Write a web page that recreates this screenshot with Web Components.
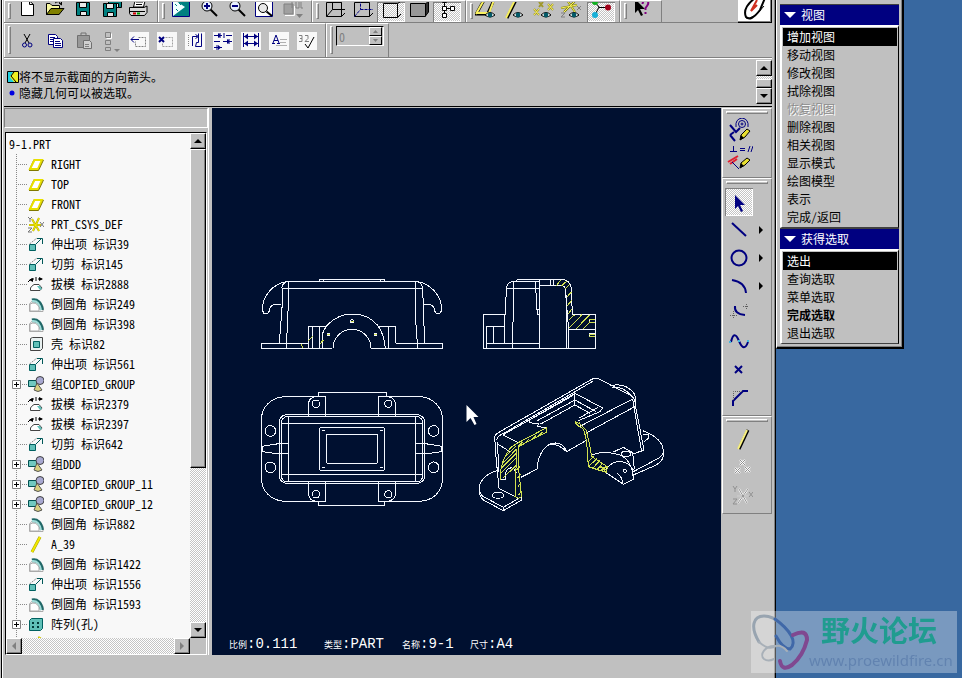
<!DOCTYPE html>
<html lang="zh-CN">
<head>
<meta charset="utf-8">
<title>9-1.PRT</title>
<style>
    :root{--face:#c0c0c0;--dark:#808080;--dither:repeating-conic-gradient(#fff 0 25%,#c4c4c4 0 50%) 0 0/2px 2px}
    body{margin:0;height:100vh;overflow:hidden;display:grid;grid-template-columns:minmax(0,1fr) 128px 58px;align-items:start;background:#3868a0;font:12px/16px "Noto Sans Mono CJK SC","Noto Sans CJK SC",sans-serif;color:#000}
</style>
</head>
<body>
<cad-window>
    <tool-bar slot="bars" kind="top">
        <tool-group>
            <tool-button icon="new" label="新建"></tool-button>
            <tool-button icon="open" label="打开"></tool-button>
            <tool-button icon="save" label="保存"></tool-button>
            <tool-button icon="copies" label="保存副本"></tool-button>
            <tool-button icon="print" label="打印"></tool-button>
        </tool-group>
        <tool-group>
            <tool-button icon="repaint" label="重画"></tool-button>
            <tool-button icon="zoomin" label="放大"></tool-button>
            <tool-button icon="zoomout" label="缩小"></tool-button>
            <tool-button icon="refit" label="重新调整"></tool-button>
            <tool-button icon="views" label="视图列表"></tool-button>
        </tool-group>
        <tool-group>
            <tool-button icon="wire" label="线框"></tool-button>
            <tool-button icon="hidden" label="隐藏线"></tool-button>
            <tool-button icon="nohidden" label="无隐藏线" pressed></tool-button>
            <tool-button icon="shade" label="着色"></tool-button>
            <tool-button icon="tree" label="模型树" pressed></tool-button>
        </tool-group>
        <tool-group>
            <tool-button icon="planes" label="基准面"></tool-button>
            <tool-button icon="axes" label="基准轴"></tool-button>
            <tool-button icon="points" label="基准点"></tool-button>
            <tool-button icon="csys" label="坐标系"></tool-button>
            <tool-button icon="spin" label="旋转中心" pressed></tool-button>
        </tool-group>
        <tool-group>
            <tool-button icon="help" label="帮助"></tool-button>
        </tool-group>
        <brand-button slot="end"></brand-button>
    </tool-bar>
    <tool-bar slot="bars">
        <tool-group>
            <tool-button icon="cut" label="剪切"></tool-button>
            <tool-button icon="copy" label="复制"></tool-button>
            <tool-button icon="paste" label="粘贴"></tool-button>
            <tool-button icon="parts" label="特征"></tool-button>
            <tool-button icon="arrowbox" label="移动"></tool-button>
            <tool-button icon="erasebox" label="拭除"></tool-button>
            <tool-button icon="switch" label="切换"></tool-button>
            <tool-button icon="align" label="对齐"></tool-button>
            <tool-button icon="dim" label="尺寸"></tool-button>
            <tool-button icon="note" label="注释"></tool-button>
            <tool-button icon="finish" label="粗糙度"></tool-button>
        </tool-group>
        <tool-group><spin-box value="0"></spin-box></tool-group>
    </tool-bar>
    <message-area slot="message"></message-area>
    <model-tree slot="tree"></model-tree>
    <drawing-view slot="view"></drawing-view>
    <tool-palette slot="palette"></tool-palette>
</cad-window>
<menu-manager>
    <menu-panel name="视图" items="增加视图*|移动视图|修改视图|拭除视图|恢复视图-|删除视图|相关视图|显示模式|绘图模型|表示|完成/返回"></menu-panel>
    <menu-panel name="获得选取" items="选出*|查询选取|菜单选取|完成选取!|退出选取"></menu-panel>
</menu-manager>
<site-mark></site-mark>

<script>
const N = '#000080', T = '#008080';
const line = (d, c = '#000', w = 1) => `<path d="${d}" fill="none" stroke="${c}" stroke-width="${w}"/>`;
const fill = (d, c, s = 'none') => `<path d="${d}" fill="${c}" stroke="${s}"/>`;
const paper = fill('M4 5h20v18H4z', '#f8f8f8');
const eye = fill('M10 13q5-5 10 0q-5 4-10 0z', '#fff', '#000') + '<circle cx="15" cy="13" r="2.4" fill="#045a68"/>';
const floppy = (x, y) => fill(`M${x} ${y}h13v13h-13z`, T, '#000') + fill(`M${x + 3} ${y}h7v5h-7zM${x + 4} ${y + 9}h6v4h-6z`, '#e8e8e8', '#000');
const lens = line('M15.500 7.500L22 14', '#000', 2) + '<circle cx="12" cy="4" r="5" fill="#e8f0ff" stroke="#000"/>';
const ARROW = 'v14l3-3 3 6 2-1-3-6h5z';

// top row glyphs live in a 28x20 box, all the others in 28x28
const TOP = {
    new: fill('M8.500-5V13.500H20.500V2.500L16.500-1V-5z', '#fff', '#000') + line('M16.500-1V2.500H20.500'),
    open: fill('M5.500 12.500V1.500H9L11 3.500H18.500V12z', '#f7f7a0', '#000') + fill('M5.500 12.500L10 6.500H23L18 12.500z', '#808000', '#000') + line('M14 1Q18-2 20 2M18 1L20.500 3V-1'),
    save: floppy(7.5, .5),
    copies: floppy(11.500, -7.500) + floppy(6.500, 1.500),
    print: fill('M8.500 5L10.500-3H20.500L18.500 5z', '#fff', '#000') + line('M11 0H18M11 2.500H17') + fill('M4.500 5.500H19L22 4V10.500L19.500 13.500H6L4.500 11.500z', '#d8d8d8', '#000') + line('M5 9.500H20') + fill('M8 10.500h3v2h-3z', '#d00000') + fill('M12 10.500h3v2h-3z', '#00a000'),
    repaint: fill('M5.500-3V14.500H22.500V-3z', T, N) + fill('M6-3L18 5L6 14z', '#f0ffff') + line('M8 2L10 4M12 1L14 3M9 7L11 9', T),
    zoomin: lens + line('M9 4H15M12 1V7', N, 2),
    zoomout: lens + line('M9 4H15', N, 2),
    refit: fill('M4.500-3V14.500H21.500V-3z', '#fff', N) + line('M15.500 9.500L21 14', '#000', 2) + '<circle cx="12" cy="6" r="4.500" fill="#e8e8e8" stroke="#000"/>',
    views: fill('M5 2h9v10H5z', '#a0a0a0', '#808080') + line('M13 0V6M17 0V6H20V0M22 0V6H24', '#808080') + line('M6 13.500H15.500V4', '#fff') + fill('M17 12h7l-3.500 4z', '#808080'),
    wire: line('M5.500 14.500V.500H20.500V14.500zM5.500 14.500L11.500 7.500V-3M11.500 7.500H24M20.500 14.500L24 11M20.500 .500L23-2'),
    hidden: line('M5.500 14.500V.500H20.500V14.500zM20.500 14.500L24 11M20.500 .500L23-2') + '<path d="M5.500 14.500L11.500 7.500V-3M11.500 7.500H24" fill="none" stroke="#000080" stroke-dasharray="3 1"/>',
    nohidden: line('M6.500 1.500V15.500H20.500V1.500zM20.500 15.500L24 12M20.500 1.500L23 0'),
    shade: fill('M20.500 2L23.500-1V10L20.500 14z', '#303030', '#000') + fill('M5.500 1.500H20.500V14.500H5.500z', '#989898', '#000'),
    tree: fill('M9.500-3.500h4v4h-4zM9.500 4.500h4v4h-4zM9.500 11.500h4v4h-4zM17.500 4.500h4v4h-4z', '#fff', '#000') + line('M11.500 1V4M14 6.500H17M11.500 9V11'),
    planes: line('M0 12H16M1 12.500L9-2M18 0L13 11', '#000', 3) + line('M1 12L9-2H19L14 11H1', '#f8f060', 2) + eye,
    axes: line('M4 16L13-2', '#000', 3) + line('M3 16L12-2', '#f8f060', 2) + eye,
    points: line('M8 0l4 5M12 0l-4 5M3 7l5 6M8 7l-5 6M17 2l5 6M22 2l-5 6', '#a0982c', 2) + line('M3 7l5 6M8 7l-5 6M17 2l5 6M22 2l-5 6', '#f8f060') + eye,
    csys: line('M2 6L18 3M8-2L16 10M17-2L5 10', '#808000', 2) + line('M2 6L18 3M8-2L16 10M17-2L5 10', '#f8f060') + line('M2 11h4l-4 4h4M18 4l4 4M22 4l-4 4', '#808080') + eye,
    spin: line('M8 0L12 5L8 13M12 5.500H21') + '<circle cx="8" cy="0" r="3" fill="#10b020"/><circle cx="8" cy="13" r="3" fill="#18b0d8"/><circle cx="21" cy="5.500" r="3" fill="#a00018"/>',
    help: fill('M6-3' + ARROW, '#000') + line('M13.500 2Q14-2 17-2Q21 0 18 4L16.500 6V8M16.500 10V12', '#800080', 2)
};
const ICON = {
    cut: line('M11 7L16 16M17 7L12 16') + '<circle cx="11.500" cy="18" r="2" fill="none" stroke="#000080"/><circle cx="17" cy="18" r="2" fill="none" stroke="#000080"/>',
    copy: fill('M7.500 7.500h7l2 2v8h-9z', '#fff', N) + line('M9 10.500h5M9 12.500h5M9 14.500h5', N) + fill('M12.500 11.500h7l2 2v7h-9z', '#fff', N) + line('M14 14.500h5M14 16.500h6M14 18.500h6', N),
    paste: fill('M8.500 8.500h12v12h-12z', '#989898', '#707070') + line('M12 8V6h5v2', '#707070') + fill('M14.500 13.500h6l2 2v6h-8z', '#d0d0d0', '#707070') + line('M16 17.500h4M16 19.500h4', '#808080'),
    parts: line('M8.500 5.500h5v5h-5zM8.500 13.500h5v4h-5zM8.500 20.500h5v3h-5z', '#808080') + line('M9.500 11.500h5v-5', '#fff') + fill('M17 22h6l-3 3z', '#808080'),
    arrowbox: paper + line('M6 12.500h8M9 9.500l-3 3 3 3', N) + '<path d="M13.500 10.500h7v9h-10v-5" fill="none" stroke="#808080" stroke-dasharray="2 1"/>',
    erasebox: paper + line('M6 10l5 5M11 10l-5 5', N, 2) + '<path d="M12.500 10.500h7v9h-10v-3" fill="none" stroke="#a0a0a0" stroke-dasharray="2 1"/>',
    switch: paper + line('M11.500 19V9.500h5M14.500 7.500l3 2-3 2M20.500 6.500v13h-6l1-4h2v-9', N) + '<path d="M7.500 8v12" stroke="#888" stroke-dasharray="1 1"/>',
    align: paper + line('M5 8.500h8M17 8.500h6M5 14.500h6M14 14.500h9M5 20.500h8M11 6v5M15 6v5M20 12v5M8 18v5', N) + fill('M9 6l3 2.500-3 2.500zM18 12l3 2.500-3 2.500zM9 18l3 2.500-3 2.500z', N),
    dim: paper + line('M6.500 6v14M21.500 6v14M7 9.500h14M7 16.500h14', N) + fill('M7 9.500l4-3v6zM21 9.500l-4-3v6zM7 16.500l4-3v6zM21 16.500l-4-3v6z', N),
    note: paper + line('M8 16l3-8 3 8M9 13.500h4M7 16.500h3M12 16.500h3', N) + line('M15 12.500h7M15 15.500h6M11 18.500h11', '#b0b0b0'),
    finish: paper + line('M12 17l3 4 6-11', '#000') + line('M6 8.500h3v3H7h2v3H6M12 8.500h3v3l-3 3h4', '#808080'),
    sketch: line('M5 7l6 7 4-4M5 17l5 6M5 17l4-3', N, 2) + '<g fill="none" stroke="#000080"><circle cx="17" cy="6" r="1"/><circle cx="17" cy="6" r="3.500"/><path d="M11 9Q10 1 17 0Q24 1 23 9"/></g>' + fill('M15 22l1-5 6-6 3 2-5 6z', '#e8e030', '#000') + fill('M15 22l1-5 3 3z', '#000'),
    constrain: line('M8.500 0v5M5 5.500h7M15 2.500h5M15 4.500h5M23 6l2-6M26 6l2-6', N) + line('M3 16l10-6M5 18l7-5', '#e02030', 2) + line('M7 16l7 7', N) + fill('M15 22l1-5 6-5 3 2-5 5z', '#e8e030', '#000') + fill('M15 22l1-5 3 3z', '#000'),
    select: fill('M10 7' + ARROW, N),
    line: line('M7 7L21 20', N, 2),
    circle: '<circle cx="14" cy="14" r="7.500" fill="none" stroke="#000080" stroke-width="2"/>',
    arc: line('M7 8Q20 10 21 21', N, 2),
    fillet: line('M10 6Q9 14 20 15', N, 2) + '<path d="M5 15.500h8M8.500 11v8M18 6.500h6M21.500 4v6" stroke="#606060" stroke-dasharray="1 1"/>',
    spline: line('M6 14Q9 1 14 13T23 14', N, 2) + fill('M4 13h2v2H4zM13 12h2v2h-2zM22 12h2v2h-2z', '#40b8e0'),
    point: line('M10 10l7 7M17 10l-7 7', N, 2),
    chamfer: line('M8 22V17L18 7H23', N, 2) + '<path d="M8.500 16V7.500H18" fill="none" stroke="#606060" stroke-dasharray="1 1"/>',
    axis: line('M23 4L14 23', '#000', 3) + line('M22 4L13 23', '#f8f080', 2),
    dpoints: line('M15 6l5 5M20 6l-5 5M10 14l5 5M15 14l-5 5M20 13l5 5M25 13l-5 5', '#fff', 2) + line('M15 6l5 5M20 6l-5 5M10 14l5 5M15 14l-5 5M20 13l5 5M25 13l-5 5', '#909090'),
    dcsys: line('M12 14h12M14 7l8 14M23 7L13 21', '#fff', 2) + line('M12 14h12M14 7l8 14M23 7L13 21M8 4l2 3 2-3M10 7v3M8 17h4l-4 5h4M24 10l4 5M28 10l-4 5', '#909090')
};
const NODE = {
    plane: fill('M1.500 13.500L6 3.500H14.500L10 13.500z', '#fff', '#807800') + line('M2 13L6.500 4H14L10 13z', '#e8e000', 2) + line('M1 14.500H10.500L15.500 4', '#807800'),
    csys: line('M1 9h12M4 3l7 12M11 2L5 15', '#b0a800', 2) + line('M1 9h12M4 3l7 12M11 2L5 15', '#f8f000') + line('M0 1l2 2 2-2M2 3v3M0 12h4l-4 4h4M12 6l4 5M16 6l-4 5', '#777'),
    extrude: fill('M1.500 8.500h6v6h-6z', '#60c0b8', '#006060') + line('M8 8L14 2M9 2.500h5.500V8', '#005858') + '<path d="M1.500 8L9 2" stroke="#888" stroke-dasharray="2 1"/>',
    draft: line('M0 6l3-3h3M10 3h4M8 1v4') + fill('M1 4l4-2v4zM15 3l-4-2v4z', '#000') + fill('M3.500 10.500L6 8.500H11L14 12L12 14.500H2.500V12z', '#fff', '#444') + fill('M9 10h3l2 3-2 1z', '#60c0b8'),
    round: fill('M1.500 15.500V8L6 3L12 6L15 10V15.500z', '#fff', '#aaa') + line('M4 4.500Q12 3 14 14', '#206868', 4) + line('M4 5Q11 4 13 14', '#a0dcd8', 2) + fill('M2 15V8Q8 5 11 11V15z', '#fff', '#aaa'),
    shell: fill('M2.500 2.500l2-1h10v11l-2 2h-10z', '#e8f0f0', '#444') + fill('M5.500 5.500h6v6h-6z', '#60c0b8', '#006060'),
    group: fill('M.500 4.500h8v6h-8z', '#70c8c0', '#005050') + '<circle cx="12" cy="4.500" r="4" fill="#a8a8d0" stroke="#444"/>' + fill('M9 7l5 7q-4 3-8 0z', '#d8d080', '#555'),
    axis: line('M12 1L4 16', '#a8a000', 3) + line('M12 1L4 16', '#f0e800', 2),
    pattern: fill('M1.500 4.500l2-2h11v10l-2 2h-11z', '#60c0b8', '#006060') + fill('M4 6h2v2H4zM9 6h2v2H9zM4 10h2v2H4zM9 10h2v2H9z', '#003838')
};

class Element extends HTMLElement {
    connectedCallback() {
        if (this.shadowRoot) return;
        this.attachShadow({ mode: 'open' });
        this.shadowRoot.innerHTML = `<style>:host,*{box-sizing:border-box}button{font:inherit;color:inherit;border:0;padding:0;margin:0;background:none}svg{display:block}${this.css()}</style>${this.html()}`;
    }
    css() { return ''; }
    html() { return '<slot></slot>'; }
}

customElements.define('cad-window', class extends Element {
    css() {
        return `
            :host{display:block;height:100vh;background:var(--face);border-left:1px solid var(--face)}
            .frame{height:100%;display:grid;grid-template-rows:auto auto minmax(0,1fr) 23px;border:solid #000;border-width:0 1px;padding:0 3px 0 2px;box-shadow:inset 1px 0 #fff,inset -1px 0 #808080}
            .work{display:grid;grid-template-columns:208px minmax(0,1fr) 51px;border-top:1px solid #000;padding-top:1px;min-height:0}
            ::slotted(*){min-height:0;min-width:0}
        `;
    }
    html() {
        return `<div class="frame"><div><slot name="bars"></slot></div><slot name="message"></slot>
            <main class="work"><slot name="tree"></slot><slot name="view"></slot><slot name="palette"></slot></main></div>`;
    }
});

customElements.define('tool-bar', class extends Element {
    css() {
        return `
            :host{display:flex;height:35px;border-bottom:1px solid #808080}
            :host([kind=top]){height:23px}
            .end{margin-left:auto}
        `;
    }
    html() { return '<slot></slot><div class="end"><slot name="end"></slot></div>'; }
});

customElements.define('tool-group', class extends Element {
    css() {
        return `
            :host{display:flex;align-items:center;padding:0 4px 0 3px;border:solid #fff;border-width:1px 1px 0 1px;border-right-color:#808080}
            i{align-self:stretch;width:3px;margin:2px 2px 3px 0;background:var(--face);border:1px solid #fff;border-right-color:#808080;border-bottom-color:#808080}
        `;
    }
    html() { return '<i></i><slot></slot>'; }
});

customElements.define('tool-button', class extends Element {
    css() {
        return `
            :host{display:block}
            button{display:block}
            :host([pressed]) button{background:var(--dither);box-shadow:inset 1px 1px #808080,inset -1px -1px #fff}
        `;
    }
    html() {
        const name = this.getAttribute('icon'), h = TOP[name] ? 20 : 28;
        return `<button aria-label="${this.getAttribute('label')}"><svg width="28" height="${h}">${TOP[name] || ICON[name]}</svg></button>`;
    }
});

customElements.define('brand-button', class extends Element {
    css() { return ':host{display:block}button{display:block;background:#fff;border:solid #000;border-width:0 1px 1px 0;box-shadow:inset -1px -1px #808080}'; }
    html() {
        return `<button aria-label="Pro/ENGINEER"><svg width="33" height="22">${line('M17-2Q4 8 8 17Q13 22 22 10L27-2', '#000', 2)}${line('M8 18Q15 20 26 6', '#000')}${line('M19 0L13 11L19 5', '#d03020', 2)}</svg></button>`;
    }
});

customElements.define('spin-box', class extends Element {
    css() {
        return `
            :host{display:block;margin:0 0 9px 1px}
            div{display:grid;grid-template-columns:32px 14px;border:1px solid #000;border-right-color:#fff;border-bottom-color:#fff;height:20px}
            input{width:32px;padding:0 2px;border:0;background:none;color:#808080;font:inherit;line-height:16px;height:18px;appearance:textfield}
            input::-webkit-inner-spin-button{display:none}
            span{display:grid;grid-template-rows:9px 9px}
            button{display:block;border:1px solid #fff;border-right-color:#000;border-bottom-color:#000;width:13px}
        `;
    }
    html() {
        return `<div><input type="number" aria-label="数值" value="${this.getAttribute('value')}" disabled><span>
            <button aria-label="增加"><svg width="11" height="7">${fill('M3 5h5L5.500 2z', '#808080')}</svg></button>
            <button aria-label="减少"><svg width="11" height="7">${fill('M3 2h5L5.500 5z', '#808080')}</svg></button></span></div>`;
    }
});

customElements.define('scroll-bar', class extends Element {
    css() {
        return `
            :host{display:grid;grid-template-rows:16px minmax(0,1fr) 16px;width:16px;background:var(--dither)}
            :host([across]){grid-template:16px/16px minmax(0,1fr) 16px;width:auto}
            button,.thumb{background:var(--face);border:1px solid #fff;border-right-color:#000;border-bottom-color:#000;box-shadow:inset -1px -1px #808080}
            .track{display:grid;grid-template-rows:var(--before,0fr) var(--size,1fr) var(--after,0fr)}
            .thumb{grid-row:2}
        `;
    }
    html() {
        const h = this.hasAttribute('across'), c = h ? '#808080' : '#000';
        const [a, b] = h ? ['M9 3v8L5 7z', 'M5 3v8L9 7z'] : ['M3 9h8L7 5z', 'M3 5h8L7 9z'];
        return `<button aria-label="${h ? '左' : '上'}"><svg width="14" height="14">${fill(a, c)}</svg></button>
            <div class="track">${h ? '' : '<div class="thumb"></div>'}</div>
            <button aria-label="${h ? '右' : '下'}"><svg width="14" height="14">${fill(b, c)}</svg></button>`;
    }
});

customElements.define('message-area', class extends Element {
    css() {
        return `
            :host{display:grid;grid-template-columns:minmax(0,1fr) 16px;height:48px;border-top:1px solid #fff}
            .log{padding:10px 0 0 3px}
            p{margin:0;display:grid;grid-template-columns:12px auto;align-items:center}
            scroll-bar{--before:3px;--size:1fr;height:44px;margin-top:1px}
        `;
    }
    html() {
        return `<div class="log" role="log">
            <p><svg width="12" height="12">${fill('M.500.500h11v11H.500z', '#f0f020', '#000')}${fill('M1 1h5L3 6l4 5H1z', '#20d0e0')}${line('M7 1L4 5l5 6', '#000')}</svg>将不显示截面的方向箭头。</p>
            <p><svg width="12" height="12"><circle cx="5" cy="6" r="2.500" fill="#0000e0"/></svg>隐藏几何可以被选取。</p>
        </div><scroll-bar></scroll-bar>`;
    }
});

customElements.define('tree-node', class extends Element {
    css() {
        return `
            :host{display:grid;grid-template-columns:22px 16px auto;height:20px;align-items:center;white-space:nowrap;line-height:20px}
            .lead{width:22px;height:20px;display:grid;place-items:center start;padding-left:6px;background:repeating-linear-gradient(#888 0 1px,transparent 1px 2px) 10px 0/1px 100% no-repeat,repeating-linear-gradient(90deg,#888 0 1px,transparent 1px 2px) 10px 10px/11px 1px no-repeat}
            .lead button{background:#fff;display:block}
            .name{padding-left:7px}
        `;
    }
    html() {
        const plus = this.hasAttribute('group') ? `<button aria-label="展开"><svg width="9" height="9">${line('M.500.500h8v8h-8z', '#808080')}${line('M2 4.500h5M4.500 2v5')}</svg></button>` : '';
        return `<span class="lead">${plus}</span><svg width="16" height="17">${NODE[this.getAttribute('icon')]}</svg><span class="name"><slot></slot></span>`;
    }
});

const FEATURES = [
    ['plane', 'RIGHT'], ['plane', 'TOP'], ['plane', 'FRONT'], ['csys', 'PRT_CSYS_DEF'],
    ['extrude', '伸出项 标识39'], ['extrude', '切剪 标识145'], ['draft', '拔模 标识2888'],
    ['round', '倒圆角 标识249'], ['round', '倒圆角 标识398'], ['shell', '壳 标识82'],
    ['extrude', '伸出项 标识561'], ['group', '组COPIED_GROUP'], ['draft', '拔模 标识2379'],
    ['draft', '拔模 标识2397'], ['extrude', '切剪 标识642'], ['group', '组DDD'],
    ['group', '组COPIED_GROUP_11'], ['group', '组COPIED_GROUP_12'], ['round', '倒圆角 标识882'],
    ['axis', 'A_39'], ['round', '倒圆角 标识1422'], ['extrude', '伸出项 标识1556'],
    ['round', '倒圆角 标识1593'], ['pattern', '阵列(孔)'], ['axis', '']
];

customElements.define('model-tree', class extends Element {
    css() {
        return `
            :host{display:grid;grid-template-rows:20px minmax(0,1fr);gap:4px;margin-right:3px;border-right:1px solid #fff}
            .head{border:1px solid #808080;border-right-color:#fff;border-bottom-color:#fff}
            .box{display:grid;grid-template:minmax(0,1fr) 16px/minmax(0,1fr) 16px;margin:0 1px;border:1px solid #000;border-right-color:#fff;border-bottom-color:#fff}
            .list{background:#f8f8f8;overflow:hidden;padding-top:1px}
            .root{height:20px;line-height:20px;padding-left:3px}
            .side{--size:319fr;--after:154fr}
        `;
    }
    html() {
        const rows = FEATURES.map(([icon, name]) => `<tree-node role="treeitem" icon="${icon}" ${icon === 'group' || icon === 'pattern' ? 'group' : ''}>${name}</tree-node>`).join('');
        return `<div class="head"></div><div class="box"><div class="list" role="tree"><div class="root">9-1.PRT</div>${rows}</div>
            <scroll-bar class="side"></scroll-bar><scroll-bar across></scroll-bar></div>`;
    }
});

customElements.define('drawing-view', class extends Element {
    css() {
        return `
            :host{display:grid;grid-template:minmax(0,1fr)/minmax(0,1fr);position:relative;background:#001030;color:#fff}
            svg{width:100%;height:100%}
            g{fill:none;stroke:#f4f8ff;shape-rendering:crispEdges}
            g *{vector-effect:non-scaling-stroke}
            .cut{stroke:#d0e050}
            .notes{position:absolute;left:17px;bottom:0;display:grid;grid-template-columns:95px 78px 68px auto;font:14px/20px "Liberation Mono",monospace}
            .notes b{font:9px/20px "Noto Sans CJK SC",sans-serif}
        `;
    }
    html() {
        const front = `
            <path d="M175 220H34V235H247M363 235H578V220H437M95 55H518M115 34H497M208 34V28H405V34M221 28V34M393 28V34"/>
            <path d="M95 55Q97 37 115 34M497 34Q516 37 518 55M97 55V100L88 220M115 34V100L109 235M497 34V150L503 235M518 55L524 220"/>
            <path d="M115 34C70 38 34 80 38 122Q40 132 48 132Q57 130 58 122C60 104 75 100 92 105M497 34C542 38 578 80 574 122Q572 132 564 132Q555 130 554 122C552 104 537 100 520 105"/>
            <path d="M218 235V190Q222 178 232 165Q265 132 306 132Q355 132 382 165Q402 190 406 235M249 235A57 57 0 0 1 363 235"/>
            <path d="M175 235V170H228M188 170V235M208 170V235M388 170H437V220M415 170V235"/>
            <circle cx="306" cy="154" r="5"/><circle cx="236" cy="193" r="4"/><circle cx="377" cy="193" r="4"/>
            <path class="cut" d="M154 222l5 12M176 212l12-14M210 222l10-12M302 154h9M232 193h9M373 193h9"/>`;
        const plan = `
            <path d="M205 380H108C60 380 34 415 34 450V622C34 665 65 694 108 694H205M410 380H505C552 380 578 415 578 450V622C578 665 550 694 505 694H405M205 380V367H410V380M205 694V706H405V694"/>
            <path d="M175 437V402Q178 380 200 380H228V437M385 437V380H412Q434 382 437 402V437M175 637V672Q178 694 200 694H228V637M385 637V694H412Q434 692 437 672V637"/>
            <rect x="88" y="434" width="436" height="206" rx="22"/><rect x="94" y="440" width="424" height="196" rx="18"/>
            <path d="M115 437V637M497 437V637M94 460H518M94 613H518M115 522H80L37 529V545L80 551H115M497 522H532L575 529V545L532 551H497"/>
            <rect x="208" y="472" width="197" height="130" rx="9"/><rect x="229" y="493" width="154" height="87" rx="6"/>
            <path d="M216 481h8M390 481h8M216 593h8M390 593h8"/>
            <circle cx="198" cy="401" r="11"/><circle cx="415" cy="401" r="11"/><circle cx="198" cy="673" r="11"/><circle cx="415" cy="673" r="11"/>
            <circle cx="61" cy="483" r="16"/><circle cx="61" cy="592" r="16"/><circle cx="551" cy="483" r="16"/><circle cx="551" cy="592" r="16"/>`;
        const section = `
            <path d="M168 133H100V235H437V133H367L364 55Q360 32 340 28H202L198 34M109 235V169H165M130 169V220M109 220H268M165 220V133L170 50Q175 34 195 34H268M190 35V120L187 235M170 55H268"/>
            <path d="M268 28V235M256 36L262 133H268M262 120H268M303 30V48M310 30V48M268 48H340Q348 52 348 70L350 235M346 60L356 178M356 235V178H437M418 149H436M418 159H436M418 149V159M418 190H436M418 200H436M418 190V200"/>
            <path class="cut" d="M318 48l14-18M334 48l18-16M344 58l16-16M350 82l14-16M351 108l15-18M354 132l13-16M356 152l18-18M358 174l38-40M378 177l40-42M400 177l20-22M418 158h18M418 149h18M418 195h18M418 200h18"/>`;
        const iso = `
            <path d="M147 655L138 560L134 500Q138 490 150 485L425 328Q437 322 450 328L545 378Q557 388 557 410L582 540L550 552"/>
            <path d="M139 510Q145 495 165 488L428 334M160 494L370 376M548 388L575 545M142 515L147 605M140 520L180 545M160 495L205 518"/>
            <path d="M238 450L375 370L458 414L450 425L385 452M262 452L375 390L438 425M375 370V405L420 430M375 405L272 462M238 450L240 458L265 462L262 470L290 473M445 412L386 445"/>
            <path d="M480 348Q520 336 548 365Q558 375 558 398M485 352Q520 348 545 378M558 408L412 487M550 386L388 470"/>
            <path d="M213 622L262 597C262 565 278 530 302 522Q336 510 350 545L408 512M302 522Q325 522 350 545"/>
            <path d="M140 602C100 615 85 640 88 660Q92 675 100 680L160 712L215 680M88 660Q88 680 100 690L160 722L215 690V680M160 712V722M147 655L200 682M150 630L165 630L168 605Q175 590 190 595L200 610"/>
            <ellipse cx="144" cy="676" rx="17" ry="9"/>
            <path d="M425 555Q460 540 510 555Q548 572 550 628L520 643L468 608M468 608Q468 585 500 575Q535 572 550 600M488 547L520 532L548 548L553 597M578 482Q640 505 640 545Q640 560 612 572L550 605M640 545V560Q635 578 612 588L550 615M580 493H595V505L582 515"/>
            <ellipse cx="528" cy="552" rx="14" ry="8"/><circle cx="524" cy="602" r="5"/><path d="M500 610Q515 615 518 640"/>
            <path class="cut" d="M150 630Q150 570 185 530L205 518L290 473V486L205 530V590L215 680L205 685L195 680L200 540M375 455Q382 470 398 475Q408 490 412 540L415 590L470 608L472 590L425 560Q415 500 408 480L390 462L375 455"/>
            <path class="cut" d="M152 610l46-46M154 595l45-45M158 580l41-42M165 560l34-32M158 625l40-38M205 528l12-12M225 519l12-12M245 509l12-12M265 499l12-13M200 600l10-10M202 625l10-12M204 650l9-12M206 675l7-10M415 575l15-16M417 588l24-22M430 593l20-22M442 598l18-20M454 604l16-16M380 465l10-8M448 592h24M452 600h18M454 588l12 18"/>`;
        return `
            <svg viewBox="212 108 509 547" role="img" aria-label="工程图">
                <g transform="translate(250 270) scale(.3333)">${front}${plan}</g>
                <g transform="translate(450 270) scale(.3333)">${section}${iso}</g>
                <path d="M466.500 405v17l4-4 4 7 2-1-3-7h5z" fill="#fff"/>
            </svg>
            <div class="notes"><span><b>比例</b>:0.111</span><span><b>类型</b>:PART</span><span><b>名称</b>:9-1</span><span><b>尺寸</b>:A4</span></div>`;
    }
});

customElements.define('tool-palette', class extends Element {
    css() {
        return `
            :host{display:block;padding-left:1px}
            section{padding:2px 3px 3px 2px;border:1px solid #fff;border-right-color:#808080;border-bottom-color:#808080}
            i{display:block;height:3px;margin:0 0 4px 1px;border:1px solid #fff;border-right-color:#808080;border-bottom-color:#808080}
            div{display:flex;align-items:center;height:28px;gap:5px}
        `;
    }
    html() {
        const fly = `<button aria-label="更多"><svg width="6" height="8">${fill('M1 0v8l4-4z', '#000')}</svg></button>`;
        const sets = ['sketch:草绘 constrain:约束', 'select:选取 line+:直线 circle+:圆 arc+:圆弧 fillet:圆角 spline:样条 point:点 chamfer:倒角', 'axis:轴 dpoints:点 dcsys:坐标系'];
        return sets.map(set => `<section><i></i>${set.split(' ').map(entry => {
            const [icon, label] = entry.split(':');
            return `<div><tool-button icon="${icon.replace('+', '')}" label="${label}" ${icon === 'select' ? 'pressed' : ''}></tool-button>${icon.endsWith('+') ? fly : ''}</div>`;
        }).join('')}</section>`).join('');
    }
});

customElements.define('menu-manager', class extends Element {
    css() { return ':host{display:block;background:var(--face);padding:4px 3px 3px 3px;border:solid #fff;border-width:0 2px 2px 1px;border-right-color:#000;border-bottom-color:#000;box-shadow:inset -1px -1px #808080}'; }
});

customElements.define('menu-panel', class extends Element {
    css() {
        return `
            :host{display:block;border-top:1px solid #404040}
            h2{margin:0;height:20px;display:flex;align-items:center;gap:5px;padding-left:4px;background:#000080;color:#fff;font:inherit}
            ul{margin:0;padding:1px 1px 1px 1px;list-style:none;border:2px solid #fff;border-right:1px solid #000;border-bottom:1px solid #404040}
            li{height:18px}
            button{display:block;width:100%;height:18px;line-height:18px;padding-left:4px;text-align:left}
            .on{background:#000;color:#fff}
            .strong{font-weight:900}
            :disabled{color:#8c8c8c;text-shadow:1px 1px #fff}
        `;
    }
    html() {
        const kinds = { '*': 'class="on"', '!': 'class="strong"', '-': 'disabled' };
        const rows = this.getAttribute('items').split('|').map(item => `<li><button ${kinds[item.at(-1)] || ''}>${item.replace(/[*!-]$/, '')}</button></li>`).join('');
        return `<h2><svg width="12" height="6">${fill('M0 0h12L6 6z', '#fff')}</svg>${this.getAttribute('name')}</h2><ul>${rows}</ul>`;
    }
});

customElements.define('site-mark', class extends Element {
    css() {
        return `
            :host{position:fixed;right:5px;bottom:5px;display:grid;grid-template-columns:58px 148px;height:62px;background:rgba(255,255,255,.33);pointer-events:none}
            .name{padding-left:12px;font:bold 29px/37px "Noto Sans CJK SC",sans-serif;color:#209c90;white-space:nowrap}
            .url{font:15px/24px "Noto Sans",sans-serif;color:#6283b0;white-space:nowrap}
        `;
    }
    html() {
        return `<svg width="58" height="62" fill="none" stroke-linecap="round">
            <path d="M8 31C-1 16 2 5 13 5Q22 5 30 13" stroke="#98a4b0" stroke-width="3"/>
            <path d="M24 8C39 19 47 31 39 38Q32 38 25 25" stroke="#4068a8" stroke-width="3"/>
            <path d="M8 31Q18 40 25 35Q31 34 36 40M25 35C14 34 8 44 13 48Q17 51 23 48" stroke="#a8b0b8" stroke-width="2"/>
            <path d="M42 24Q56 17 56 29Q52 45 41 54Q31 61 29 50" stroke="#804890" stroke-width="4"/></svg>
            <div><div class="name">野火论坛</div><div class="url">www.proewildfire.cn</div></div>`;
    }
});
</script>
</body>
</html>
